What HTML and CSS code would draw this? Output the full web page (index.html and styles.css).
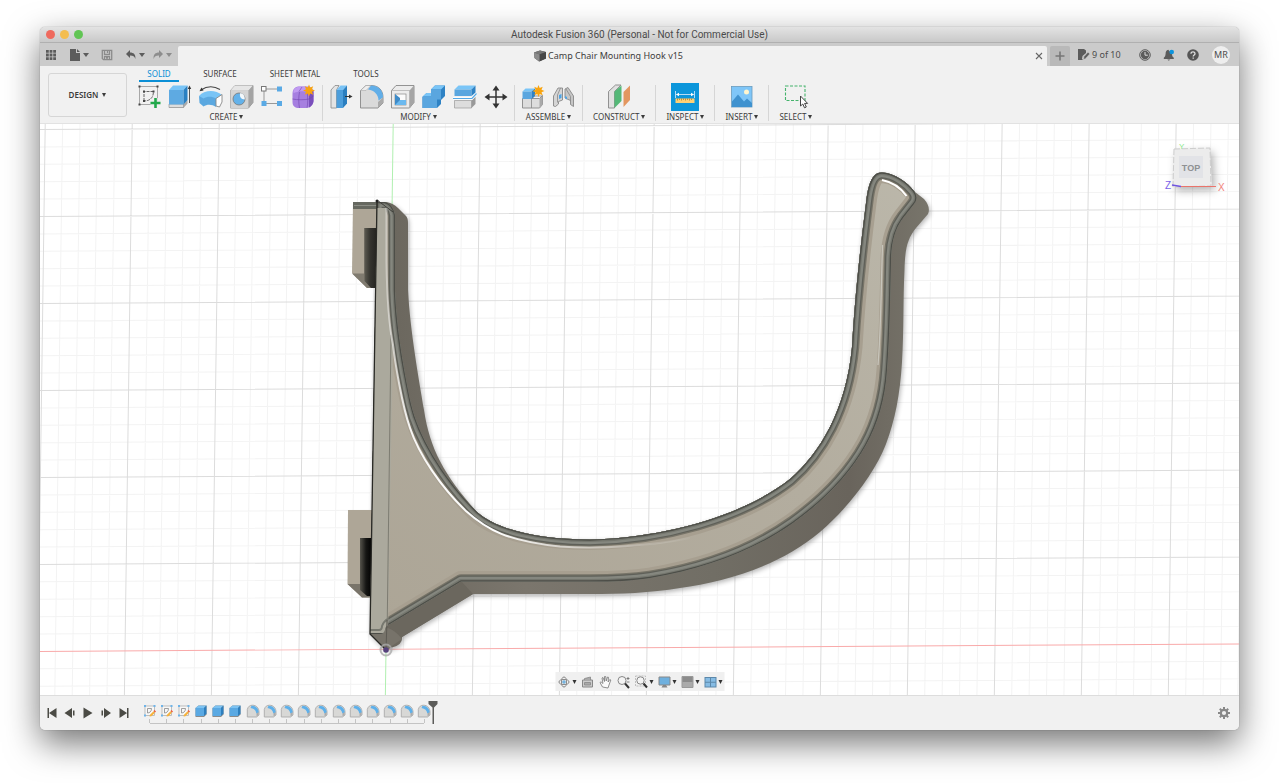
FILE: index.html
```html
<!DOCTYPE html>
<html lang="en">
<head>
<meta charset="utf-8">
<title>Autodesk Fusion 360</title>
<link rel="stylesheet" href="styles.css">
</head>
<body>
<svg class="defs" aria-hidden="true">
  <defs>
    <symbol id="t-sketch" viewBox="0 0 14 14">
      <rect x="2" y="2" width="9.500" height="9.500" fill="#f7f7f7" stroke="#a5a5a5" stroke-width=".7"/>
      <path d="M4.500 9V4.500h4c0 3-2 4.500-4 4.500z" fill="none" stroke="#888" stroke-width=".8"/>
      <path d="M1 1h2v2H1zM10.500 1h2v2h-2zM1 10.500h2v2H1z" fill="#6fb4e8"/>
      <path d="M6.500 12.500l.5-1.700 3.500-3.500 1.400 1.400-3.500 3.500z" fill="#f6b13a"/><path d="M10.500 7l1-1 1.500 1.500-1 1z" fill="#ee5a3a"/>
    </symbol>
    <symbol id="t-extrude" viewBox="0 0 14 14">
      <path d="M1.500 4l3-2.500h8v9L10 13H1.500z" fill="#8b8b8b"/>
      <path d="M1.500 4l3-2.500h8L10 4z" fill="#7cc3f3"/><path d="M1.500 4H10v8H1.500z" fill="#5aa9e3"/><path d="M10 4l2.500-2.500v8L10 12z" fill="#2d7fbe"/>
    </symbol>
    <symbol id="t-fillet" viewBox="0 0 14 14">
      <path d="M1.300 5.500C2 2.500 4 1.200 6.500 1.200c4 0 6.500 3 6.500 6.800v3L10.500 13H1.300z" fill="#d8d8d6" stroke="#aaa" stroke-width=".9"/>
      <path d="M5.500 1.700c4.500 0 7 2.800 7.300 6.800l-2.500 1C10 6.500 8 4.500 4.500 4z" fill="#5eb0ea"/>
      <path d="M10.500 9.500l2-1.500v3l-2 1.500z" fill="#ababab"/>
    </symbol>
  </defs>
</svg>

<div class="window">
  <header class="titlebar">
    <div class="lights"><i class="light red"></i><i class="light amber"></i><i class="light green"></i></div>
    <h1 class="title">Autodesk Fusion 360 (Personal - Not for Commercial Use)</h1>
  </header>

  <div class="tabbar">
    <div class="quick">
      <button class="qbtn" aria-label="Data panel"><svg width="12" height="12" viewBox="0 0 12 12" fill="#5c5c5c"><path d="M1 1h2.800v2.800H1zM4.600 1h2.800v2.800H4.600zM8.200 1H11v2.800H8.200zM1 4.600h2.800v2.800H1zM4.600 4.600h2.800v2.800H4.600zM8.200 4.600H11v2.800H8.200zM1 8.200h2.800V11H1zM4.600 8.200h2.800V11H4.600zM8.200 8.200H11V11H8.200z"/></svg></button>
      <button class="qbtn file" aria-label="File"><svg width="12" height="12" viewBox="0 0 12 12"><path d="M1 0h6v4h4v8H1z" fill="#5c5c5c"/><path d="M8 0l3 3H8z" fill="#5c5c5c"/></svg><i class="caret"></i></button>
      <button class="qbtn save" aria-label="Save"><svg width="12" height="12" viewBox="0 0 12 12" fill="none" stroke="#8b8b8b" stroke-width="1.300"><path d="M1.300 1.300h9.400v9.400H2.500L1.300 9.500z"/><path d="M3.500 1.500v3.800h5V1.500M3.500 10.500V7.500h5v3M6.500 2v2M5 9h2"/></svg></button>
      <button class="qbtn" aria-label="Undo"><svg width="12" height="12" viewBox="0 0 12 12"><path d="M5 1v2.600c3.500 0 6 2 5.300 6.400C9.500 7.500 8 6.500 5 6.600V9L1 5z" fill="#5c5c5c"/></svg><i class="caret"></i></button>
      <button class="qbtn dim" aria-label="Redo"><svg width="12" height="12" viewBox="0 0 12 12"><path d="M7 1v2.600C3.500 3.600 1 5.600 1.700 10 2.500 7.500 4 6.500 7 6.600V9l4-4z" fill="#8d8d8d"/></svg><i class="caret"></i></button>
    </div>
    <div class="doc">
      <svg width="12" height="12" viewBox="0 0 12 12"><path d="M0 2.500L6 .5 12 2v6.500L5 11.500.5 8z" fill="#555"/><path d="M0 2.500L6 .5 12 2 5.500 4.500z" fill="#777"/><path d="M5.500 4.500L12 2v6.500l-6.500 3z" fill="#484848"/><path d="M0 2.500l5.500 2v7L.5 8z" fill="#8c8c8c"/></svg>
      <span>Camp Chair Mounting Hook v15</span>
      <button class="close" aria-label="Close tab"><svg width="8" height="8" viewBox="0 0 8 8"><path d="M1 1l6 6M7 1L1 7" stroke="#666" stroke-width="1.100"/></svg></button>
    </div>
    <div class="status">
      <button class="plus" aria-label="New design"><svg width="10" height="10" viewBox="0 0 10 10"><path d="M5 .5v9M.5 5h9" stroke="#777" stroke-width="1.600"/></svg></button>
      <button class="count"><svg width="13" height="13" viewBox="0 0 13 13"><path d="M1 1h6l2 1.500V5L5.500 8 5 11l1 1H1z" fill="#5c5c5c"/><path d="M6.500 11.500l.5-3L11 4.200l1.700 1.700L8.800 10.200z" fill="#5c5c5c" stroke="#ccc" stroke-width=".5"/></svg><span>9 of 10</span></button>
      <button class="round" aria-label="Job status"><svg width="12" height="12" viewBox="0 0 12 12"><circle cx="6" cy="6" r="5.300" fill="none" stroke="#5c5c5c" stroke-width="1"/><circle cx="6" cy="6" r="4.200" fill="#5c5c5c"/><path d="M6 3v3.200h2.800" stroke="#ddd" fill="none"/></svg></button>
      <button class="round" aria-label="Notifications"><svg width="12" height="12" viewBox="0 0 12 12"><path d="M5.300.8c-2.200.5-2.600 2-2.700 4-.1 2-.7 3-1.800 4V10h10V8.800C9.500 8 9 6.500 9 5z" fill="#5c5c5c"/><path d="M4.300 10.500h3l-1.500 1.300z" fill="#5c5c5c"/><circle cx="8.700" cy="3" r="2.300" fill="#0d94dd"/></svg></button>
      <button class="round" aria-label="Help"><svg width="12" height="12" viewBox="0 0 12 12"><circle cx="6" cy="6" r="5.800" fill="#555"/><path d="M4 4.700c0-2.600 4-2.400 4 0C8 6 6.200 6 6.200 7.400M6.200 8.400v1.300" fill="none" stroke="#ddd" stroke-width="1.300"/></svg></button>
      <button class="avatar">MR</button>
    </div>
  </div>

  <div class="toolbar">
    <button class="workspace">DESIGN<i class="caret"></i></button>
    <div class="ribbon">
      <nav class="tabs">
        <a class="tab on" href="#solid">SOLID</a><a class="tab surface" href="#surface">SURFACE</a><a class="tab sheet" href="#sheet">SHEET METAL</a><a class="tab" href="#tools">TOOLS</a>
      </nav>
      <div class="groups">
        <section class="group">
          <div class="icons">
            <button class="tool" aria-label="Create sketch"><svg viewBox="0 0 26 26"><path d="M3.500 2.500h18v18h-18z" fill="none" stroke="#888" stroke-width=".7"/><path d="M2.500 1.500h2V3.500h-2zM20.500 1.500h2V3.500h-2zM2.500 19.500h2v2h-2z" fill="#444"/><path d="M8 17V7.500h9.500C17.500 14 13.500 17 8 17z" fill="none" stroke="#555" stroke-width=".9" stroke-dasharray="3 1"/><path d="M7 6.500h2v2H7zM16.500 6.500h2v2h-2zM7 16h2v2H7z" fill="#444"/><path d="M19.500 14v10M14.500 19h10" stroke="#f0f0f0" stroke-width="4.500"/><path d="M19.500 14v10M14.500 19h10" stroke="#22a84b" stroke-width="2.600"/></svg></button>
            <button class="tool" aria-label="Extrude"><svg viewBox="0 0 26 26"><path d="M2 20h14.500l4-4v3.500L16.500 24H2z" fill="#aaa"/><path d="M2 20h14.500v3.500H2z" fill="#ddd" stroke="#999" stroke-width=".7"/><path d="M2 6l4-4.500h14.500L16.500 6z" fill="#7ac5f7"/><path d="M2 6h14.500v14.500H2z" fill="#5eaae2"/><path d="M16.500 6l4-4.500V16l-4 4.500z" fill="#2a80c2"/><path d="M22.500 19V4" stroke="#444" stroke-width=".9"/><path d="M20.800 5l1.700-3.500L24.200 5z" fill="#333"/></svg></button>
            <button class="tool" aria-label="Revolve"><svg viewBox="0 0 26 26"><path d="M1 12C6 6 17 5 24 11l-5.500 5C15 13.500 9 14 5.500 17z" fill="#79c4f6"/><path d="M1 12l4.500 2.500C9 12 14 12 18 14.500V23c-4-3-9-3-12.500-.5L1.500 19z" fill="#5ba8e0"/><path d="M18 14.500l6-4v7.500l-2.500 5L18 22z" fill="#fff" stroke="#888" stroke-width=".9"/><path d="M3 6c6-4 13-4 19-.5" fill="none" stroke="#444" stroke-width="1.100"/><path d="M1.500 7.200L3.500 3.500 5.500 6.500z" fill="#333"/></svg></button>
            <button class="tool" aria-label="Hole"><svg viewBox="0 0 26 26"><path d="M1.500 6.500L6 1.500h18v17L19.500 24h-18z" fill="#bbb" stroke="#8a8a8a" stroke-width=".8"/><path d="M1.500 6.500L6 1.500h18l-4.500 5z" fill="#e6e6e6"/><path d="M1.500 6.500h18V24h-18z" fill="#d4d4d4"/><path d="M19.500 6.500l4.500-5v17L19.500 24z" fill="#a4a4a4"/><circle cx="10" cy="15" r="6" fill="#64b2ea" stroke="#777" stroke-width=".8"/><path d="M11 9.300c-.5 4 1 6 4.800 6.300C16 11 13.500 9.300 11 9.300z" fill="#f3f8fb"/></svg></button>
            <button class="tool" aria-label="Rectangular pattern"><svg viewBox="0 0 26 26"><path d="M4 5v14.500h15M4 5h15" fill="none" stroke="#999" stroke-width="1"/><rect x="1.500" y="2.500" width="4.500" height="4.500" fill="#fff" stroke="#777"/><path d="M17 2.500h5v5h-5zM1.500 17h5v5h-5zM17 17h5v5h-5z" fill="#5aaae5"/></svg></button>
            <button class="tool" aria-label="Create form"><svg viewBox="0 0 26 26"><path d="M1.500 10c0-5 2.500-7.500 7-7.500h8c4 0 6 3 6 7v7c0 4-3 7.500-8 7.500H8c-4 0-6.500-2-6.500-6z" fill="#a67fe0"/><path d="M18 9l4.500-3v11c0 3-3 6-4.500 6.500z" fill="#7a4fbb"/><path d="M2.500 6.500C5 2 8 2.500 15 2.500L18 8C13 7 8 7 2.500 9z" fill="#c09bf1"/><path d="M1.500 15c5 1 12 1 16.500 0l4.500-3M8.500 8c-1 5-1 11 0 16M16 8c1 5 1 11 0 16M8 7.500L11 3" fill="none" stroke="#7145ae" stroke-width=".6"/><path d="M18 .5l1.200 3 3-1.200-1.200 3L24 6.500l-3 1.200 1.200 3-3-1.200-1.200 3-1.200-3-3 1.200 1.200-3-3-1.200 3-1.200-1.200-3 3 1.200z" fill="#f8a40f"/></svg></button>
          </div>
          <button class="menu">CREATE<i class="caret"></i></button>
        </section>
        <section class="group">
          <div class="icons">
            <button class="tool" aria-label="Press pull"><svg viewBox="0 0 26 26"><path d="M3 6l4-4.500h4L8.500 6v18H3z" fill="#e4e4e4" stroke="#8a8a8a" stroke-width=".8"/><path d="M8.500 6l4-4.500h6.500l-4 4.500z" fill="#79c3f6"/><path d="M8.500 6H15v18H8.500z" fill="#4d9edb"/><path d="M15 6l4-4.500v18L15 24z" fill="#2b7fc0"/><path d="M17 12.500h5" stroke="#333"/><path d="M21 10.500l3.500 2-3.500 2z" fill="#333"/></svg></button>
            <button class="tool" aria-label="Fillet"><svg viewBox="0 0 26 26"><path d="M1.500 6.500L7 1.500h5c8 0 12 5 12 12V19l-5 5H1.500z" fill="#dadada" stroke="#888" stroke-width=".9"/><path d="M1.500 6.500L7 1.500h5l-5 5z" fill="#eee" stroke="#aaa" stroke-width=".6"/><path d="M9 5.500l3-4c8 0 12 5 12 12l-4.500 3c0-6-4-10-10.500-11z" fill="#61aee8"/><path d="M19 18l5-4.500V19l-5 5z" fill="#aaa"/></svg></button>
            <button class="tool" aria-label="Shell"><svg viewBox="0 0 26 26"><path d="M1.500 6.500L6 1.500h18v17L19.500 24h-18z" fill="#ececec" stroke="#888" stroke-width=".9"/><path d="M19.500 6.500l4.500-5v17L19.500 24z" fill="#a5a5a5"/><path d="M1.500 6.500h18V24" fill="none" stroke="#aaa" stroke-width=".7"/><rect x="5" y="10" width="11" height="11" fill="#fafafa" stroke="#888" stroke-width=".7"/><path d="M5 10l5 4v7H5z" fill="#3e8bc8"/><path d="M5 21l5-5h6v5z" fill="#6bb9ef"/></svg></button>
            <button class="tool" aria-label="Combine"><svg viewBox="0 0 26 26"><path d="M1.500 13l4-4H10V5.500l4-4h10V12l-4 4v4l-4 4H1.500z" fill="#2e82c4"/><path d="M1.500 12.500l4-3.500H10v3.500zM10 5.500l4-4h10l-4 4z" fill="#7ac5f7"/><path d="M1.500 12.500H10v-7h10v10h-4V24H1.500z" fill="#5aa6df"/></svg></button>
            <button class="tool" aria-label="Split body"><svg viewBox="0 0 26 26"><path d="M2.500 5.500l4-4h17l-4 4z" fill="#7ac5f7"/><path d="M2.500 5.500h17V12h-17z" fill="#5aa6df"/><path d="M19.500 5.500l4-4v7l-4 3.500z" fill="#2e82c4"/><path d="M2.500 16.500h17V24h-17z" fill="#ddd" stroke="#999" stroke-width=".7"/><path d="M19.500 16.500l4-4V20l-4 4z" fill="#999"/><path d="M1 14.500h19l4.500-5" fill="none" stroke="#fff" stroke-width="2.500"/><path d="M1 14.500h19l4.500-5" fill="none" stroke="#55a8e4" stroke-width="1.200"/></svg></button>
            <button class="tool" aria-label="Move"><svg viewBox="0 0 26 26"><path d="M13 4v18M4 13h18" stroke="#333" stroke-width="1.500"/><path d="M13 1.500l3.500 5h-7zM13 24.500l3.500-5h-7zM1.500 13l5-3.500v7zM24.500 13l-5-3.500v7z" fill="#333"/></svg></button>
          </div>
          <button class="menu">MODIFY<i class="caret"></i></button>
        </section>
        <section class="group">
          <div class="icons">
            <button class="tool" aria-label="New component"><svg viewBox="0 0 26 26"><path d="M2.500 14.500h17l3-3v9L19.500 24h-17z" fill="#ddd" stroke="#888" stroke-width=".9"/><path d="M11.500 15v9M11.500 15l3-3h8" stroke="#888" fill="none" stroke-width=".8"/><path d="M19.500 15l3-3v8.500l-3 3.500z" fill="#aaa"/><path d="M2.500 7.500l3-3H15l-3.500 3z" fill="#7ac5f7"/><path d="M2.500 7.500h9V15h-9z" fill="#5aa6df"/><path d="M11.500 7.500l3.500-3V12l-3.500 3z" fill="#2e82c4"/><path d="M18.500 1l1.200 3 3-1.200-1.200 3 3 1.200-3 1.200 1.200 3-3-1.200-1.200 3-1.200-3-3 1.200 1.200-3-3-1.200 3-1.200-1.200-3 3 1.200z" fill="#f8a40f"/></svg></button>
            <button class="tool" aria-label="Joint"><svg viewBox="0 0 26 26"><path d="M2.500 22V12L7 4h4.500v12l-4 1.500V20L4.500 22.500z" fill="#d5d5d5" stroke="#888" stroke-width=".9"/><path d="M6.500 18.500V11L9.500 4" fill="none" stroke="#888" stroke-width=".8"/><path d="M14 12V5l3-1.500L22.500 12v10.500l-3-2v-4L14 14z" fill="#c6c6c6" stroke="#888" stroke-width=".9"/><path d="M19.500 17v-4.500L15 5" fill="none" stroke="#888" stroke-width=".8"/><path d="M8 11l2.500-1v4L8 15zM14 12l2 1v2.500L14 14z" fill="#4da4e6"/></svg></button>
          </div>
          <button class="menu">ASSEMBLE<i class="caret"></i></button>
        </section>
        <section class="group wide">
          <div class="icons"><button class="tool" aria-label="Offset plane"><svg viewBox="0 0 26 26"><path d="M2.500 7.500l7-6.500H15L8.500 7.500V24h-6z" fill="#e0e0e0" stroke="#888" stroke-width=".9"/><path d="M8.500 7.500L15.500 1.500V17l-7 7z" fill="#54b877"/><path d="M17.500 8l6.500-6.500V16l-6.500 7z" fill="#e39760"/></svg></button></div>
          <button class="menu">CONSTRUCT<i class="caret"></i></button>
        </section>
        <section class="group wide">
          <div class="icons"><button class="tool active" aria-label="Measure"><svg viewBox="0 0 26 26"><path d="M3.500 7v7M22.500 7v7M4.500 10.500h17" stroke="#b4dcf6" stroke-width="1"/><path d="M4 10.500l3-1.700v3.400zM22 10.500l-3-1.700v3.400z" fill="#fff"/><path d="M3.500 14.500h19V19h-19z" fill="#ffd176"/><path d="M5.500 14.500v2M7.500 14.500v1.500M9.500 14.500v2M11.500 14.500v1.500M13.500 14.500v2M15.500 14.500v1.500M17.500 14.500v2M19.500 14.500v1.500" stroke="#a37528" stroke-width=".7"/></svg></button></div>
          <button class="menu">INSPECT<i class="caret"></i></button>
        </section>
        <section class="group wide">
          <div class="icons"><button class="tool" aria-label="Insert image"><svg viewBox="0 0 26 26"><rect x="2.500" y="2.500" width="20.500" height="20.500" fill="#7fc6f8" stroke="#6a9cbe" stroke-width=".8"/><circle cx="17.500" cy="8" r="2.500" fill="#fff5ce"/><path d="M3 17.500l6-7 6 7 3-3 5 4.500v4H3z" fill="#3f92cf"/></svg></button></div>
          <button class="menu">INSERT<i class="caret"></i></button>
        </section>
        <section class="group wide">
          <div class="icons"><button class="tool" aria-label="Select"><svg viewBox="0 0 26 26"><rect x="2.500" y="2" width="19.500" height="14.500" fill="none" stroke="#45b36c" stroke-width="1.100" stroke-dasharray="3 1.500"/><path d="M17.500 12v10l2.300-2 1.700 3.800 1.800-.8-1.700-3.600h3z" fill="#fff" stroke="#444" stroke-width="1"/></svg></button></div>
          <button class="menu">SELECT<i class="caret"></i></button>
        </section>
      </div>
    </div>
  </div>

  <main class="viewport">
    <svg class="scene" viewBox="40 124 1199 571" preserveAspectRatio="xMidYMid slice" role="img" aria-label="Hook model">
      <defs>
        <linearGradient id="face" x1="0" y1="1" x2="1" y2="0"><stop offset="0" stop-color="#aca596"/><stop offset=".55" stop-color="#b3ad9f"/><stop offset="1" stop-color="#bbb7aa"/></linearGradient>
        <linearGradient id="side" gradientUnits="userSpaceOnUse" x1="390" y1="0" x2="930" y2="0"><stop offset="0" stop-color="#6b675e"/><stop offset=".25" stop-color="#7b766d"/><stop offset=".6" stop-color="#716e65"/><stop offset=".85" stop-color="#69645c"/><stop offset="1" stop-color="#78756b"/></linearGradient>
        <linearGradient id="recess"><stop offset="0" stop-color="#5c5a51"/><stop offset=".45" stop-color="#35342f"/><stop offset="1" stop-color="#23221f"/></linearGradient>
        <linearGradient id="recess2"><stop offset="0" stop-color="#56544c"/><stop offset=".5" stop-color="#161614"/><stop offset="1" stop-color="#000"/></linearGradient>
        <linearGradient id="shine" gradientUnits="userSpaceOnUse" x1="385" y1="0" x2="700" y2="0"><stop offset="0" stop-color="#fff" stop-opacity=".4"/><stop offset=".08" stop-color="#fff" stop-opacity=".9"/><stop offset=".35" stop-color="#fff"/><stop offset=".55" stop-color="#fff" stop-opacity=".55"/><stop offset="1" stop-color="#fff" stop-opacity="0"/></linearGradient>
        <filter id="soft" x="-10%" y="-10%" width="120%" height="120%"><feGaussianBlur stdDeviation="2.500"/></filter>
        <path id="body" d="M377 202 H386 Q393 203 398 208 L406 216 Q408 218 408 223 L408 290 C410 330 419 380 424 410 C430 450 445 476 477 512 C497 530 540 539.500 590 539.500 C660 538 740 518 790 479 C820 453 846 410 852 347 C855 295 860 250 866 203 C868 185 872 172 882 172.500 C895 173 908 185 915 192 L924 199 Q931 207 928 214 L916 228 C907 239 905 250 904.500 270 C903 300 904 330 902 362 C900 395 895 420 886 444 C875 473 848 508 820 532 C780 566 725 582 680 588 C650 593 620 594 590 594 H473 L402 637 Q403 645 392 647.500 L386 650 L370 634 Z"/>
        <path id="top" d="M377 202 H385 Q393 204 395 215 L395 290 C396 325 404 372 411 404 C418 435 442 477 477 512 C497 530 540 539.500 590 539.500 C660 538 740 518 790 479 C820 453 846 410 852 347 C855 295 860 250 866 203 C868 185 872 172 882 172.500 C895 173 908 183 914 191 Q919 198 914 204 L903 218 C894 230 891 245 891 262 C890 300 890 330 887 370 C885 400 878 423 866 445 C850 474 825 500 793 523 C755 550 705 569 650 578 C630 581 615 581.500 590 581.500 H461 L390 624 Q385 626 385 630 Q384 634 380 634 H370 Z"/>
        <clipPath id="topclip"><use href="#top"/></clipPath>
      </defs>
      <rect x="-600" y="-600" width="2500" height="2000" fill="#fff"/>
      <g id="grid" transform="matrix(1 -.00625 -.0137 1 386 649.300)"></g>
      <g filter="url(#soft)" opacity=".3"><use href="#body" x="1" y="2"/></g>
      <path d="M353 202H377V288H367L352 273z" fill="#aea697"/>
      <path d="M353 202H378V209H353z" fill="#666860"/><path d="M354 205.500H377" stroke="#8b8d85"/>
      <path d="M352 273.500H364V228H377V288H367z" fill="#807b70"/>
      <path d="M364.500 228H377V288H371L364.500 281z" fill="url(#recess)"/>
      <path d="M348 510H373V597.500H362L347.500 584z" fill="#aea697"/>
      <path d="M347.500 584H360V538H372V597.500H362z" fill="#79746a"/>
      <path d="M360 538H372V596H367L360 590z" fill="url(#recess2)"/>
      <use href="#body" fill="url(#side)"/>
      <path d="M461 581L473 594 402 637 388 626z" fill="#6b675e"/>
      <path d="M370 634L386 650 402 639Q396 631 388 628z" fill="#77736a"/>
      <g clip-path="url(#topclip)" fill="none" stroke-linejoin="round">
        <use href="#top" fill="url(#face)"/>
        <use href="#top" stroke="#a79f90" stroke-width="21"/>
        <use href="#top" stroke="#777468" stroke-width="14.500"/>
        <use href="#top" stroke="#5f6059" stroke-width="12"/>
        <use href="#top" stroke="#85877f" stroke-width="9.500"/>
        <use href="#top" stroke="#74766e" stroke-width="5"/>
        <use href="#top" stroke="#4d4e48" stroke-width="2.500"/>
        <path d="M377 208H386V262C386 300 391 335 393 346L388 633H370z" fill="#aba99d"/>
        <path d="M391 335L387 640" stroke="#77766c" stroke-width=".9"/>
        <path d="M386.500 208V262C387 300 389 325 393 345C395 362 402 405 410 428C419 455 441 487 466 511C487 530 508 541 560 546.500C600 549 650 546 690 538" stroke="url(#shine)" stroke-width="2"/>
        <path d="M882 180C892 182 901 188 906.500 196" stroke="#fff" stroke-width="2"/>
        <path d="M882.500 245C881 290 881 330 878 365" stroke="#d0cec5" stroke-width="1.300" opacity=".8"/>
        <path d="M370 630H379Q382 630 382 626 384 621 388 619" stroke="#77786f" stroke-width="2"/>
      </g>
      <path d="M377 200L370 634 386 650" fill="none" stroke="#292925" stroke-width="1.300"/>
      <path d="M377 200L393 212" stroke="#3d3d39" stroke-width="1"/>
      <path d="M387 620L386 650" stroke="#55534c" stroke-width=".8"/>
      <circle cx="377" cy="201" r="1.500" fill="#222"/>
      <circle cx="386" cy="650" r="5.500" fill="none" stroke="#aaa" stroke-width="2" opacity=".8"/>
      <circle cx="386" cy="650" r="2.800" fill="#55427c"/>
    </svg>

    <svg class="viewcube" width="66" height="56" viewBox="0 0 66 56" role="img" aria-label="View cube">
      <g class="cube"><path d="M11 9L47 8 49 46 10 47z" fill="#ececec"/></g>
      <path d="M11 9L47 8 48 46 10 47z" fill="none" stroke="#cdcdcd" stroke-dasharray="6 2"/>
      <rect x="16" y="16" width="24" height="22" fill="#e2e3e7"/>
      <path d="M9 45l9 1.500" stroke="#6f55e0" stroke-width="1.500"/><path d="M18 46.500h35" stroke="#ed6a60" stroke-width=".9"/>
      <text class="cube-face" x="28" y="31" text-anchor="middle">TOP</text>
      <text class="axis" x="2" y="49" fill="#7a62e8">Z</text><text class="axis" x="55" y="51" fill="#f2837c">X</text><text class="axis small" x="16" y="9" fill="#8ae88a">Y</text>
    </svg>

    <div class="navbar">
      <button aria-label="Orbit"><svg width="14" height="14" viewBox="0 0 14 14" fill="none" stroke="#888"><ellipse cx="6.500" cy="7" rx="5" ry="2.500"/><ellipse cx="6.500" cy="7" rx="2.500" ry="5"/><path d="M6.500 5v4M4.500 7h4" stroke="#4e9fd8"/></svg><i class="caret"></i></button>
      <button aria-label="Look at"><svg width="14" height="14" viewBox="0 0 14 14"><path d="M2 5h10v7H2z" fill="#ccc" stroke="#888"/><path d="M4 5V3.500l6-1.500v3M4 7.500h6v2.500H4z" fill="#aaa" stroke="#888" stroke-width=".8"/></svg></button>
      <button aria-label="Pan"><svg width="14" height="14" viewBox="0 0 14 14"><path d="M4 12L1.500 7.500l1-.7L4.500 8.500 3.500 3l1-.5L6 6.500 6 1.500h1.200L7.700 6 9 2l1 .3L9.600 7l1.700-2.500 1 .5-1.800 5-1 3z" fill="#fafafa" stroke="#777" stroke-width=".8"/></svg></button>
      <button aria-label="Zoom"><svg width="14" height="14" viewBox="0 0 14 14"><circle cx="5.500" cy="5.500" r="4" fill="#f4f4f4" stroke="#888"/><path d="M8.500 8.500L12.500 13" stroke="#333" stroke-width="2"/><path d="M11.500 2v3M10 3.500h3M10 7h3" stroke="#666" stroke-width=".8"/></svg></button>
      <button aria-label="Fit"><svg width="14" height="14" viewBox="0 0 14 14"><path d="M1 1h10v10H1z" fill="none" stroke="#aaa" stroke-width=".7" stroke-dasharray="2 1"/><circle cx="6" cy="5.500" r="3.700" fill="#f4f4f4" stroke="#888"/><path d="M9 8.500l3.500 4" stroke="#333" stroke-width="2"/></svg><i class="caret"></i></button>
      <button aria-label="Display settings"><svg width="14" height="14" viewBox="0 0 14 14"><path d="M1.500 2h11v8h-11z" fill="#6fb0de" stroke="#888"/><path d="M4 12.500h6L8.500 10h-3z" fill="#888"/></svg><i class="caret"></i></button>
      <button aria-label="Grid and snaps"><svg width="14" height="14" viewBox="0 0 14 14"><path d="M1.500 1.500h11v11h-11z" fill="#aaa" stroke="#999"/><path d="M2 2h10v5H2z" fill="#8b8b8b"/></svg><i class="caret"></i></button>
      <button aria-label="Viewports"><svg width="14" height="14" viewBox="0 0 14 14"><path d="M1 2h12v10.500H1z" fill="#5c88aa"/><path d="M2 3h4.500v3.700H2zM7.500 3H12v3.700H7.500zM2 7.700h4.500v3.800H2zM7.500 7.700H12v3.800H7.500z" fill="#86bce4"/></svg><i class="caret"></i></button>
    </div>
  </main>

  <footer class="timeline">
    <div class="playback">
      <button aria-label="Go to start"><svg width="12" height="12" viewBox="0 0 12 12" fill="#4b4b45"><path d="M1.500 1H3v10H1.500zM10.500 1v10L3 6z"/></svg></button>
      <button aria-label="Step back"><svg width="12" height="12" viewBox="0 0 12 12" fill="#4b4b45"><path d="M8 1v10L.5 6zM9 3.500h1.500v5H9z"/></svg></button>
      <button aria-label="Play"><svg width="12" height="12" viewBox="0 0 12 12" fill="#4b4b45"><path d="M1.500 .5v11L10.500 6z"/></svg></button>
      <button aria-label="Step forward"><svg width="12" height="12" viewBox="0 0 12 12" fill="#4b4b45"><path d="M4 1v10l7-5zM1.500 3.500H3v5H1.500z"/></svg></button>
      <button aria-label="Go to end"><svg width="12" height="12" viewBox="0 0 12 12" fill="#4b4b45"><path d="M9 1h1.500v10H9zM1.500 1v10L9 6z"/></svg></button>
    </div>
    <div class="history">
      <ol class="steps">
        <li><svg><use href="#t-sketch"/></svg></li><li><svg><use href="#t-sketch"/></svg></li><li><svg><use href="#t-sketch"/></svg></li>
        <li><svg><use href="#t-extrude"/></svg></li><li><svg><use href="#t-extrude"/></svg></li><li><svg><use href="#t-extrude"/></svg></li>
        <li><svg><use href="#t-fillet"/></svg></li><li><svg><use href="#t-fillet"/></svg></li><li><svg><use href="#t-fillet"/></svg></li><li><svg><use href="#t-fillet"/></svg></li><li><svg><use href="#t-fillet"/></svg></li><li><svg><use href="#t-fillet"/></svg></li><li><svg><use href="#t-fillet"/></svg></li><li><svg><use href="#t-fillet"/></svg></li><li><svg><use href="#t-fillet"/></svg></li><li><svg><use href="#t-fillet"/></svg></li><li><svg><use href="#t-fillet"/></svg></li>
      </ol>
      <svg class="marker" width="10" height="24" viewBox="0 0 10 24"><path d="M.5 1h9v3L6 7.500V24H4.500V7.500L.5 4z" fill="#5c5c5a"/></svg>
    </div>
    <button class="gear" aria-label="Settings"><svg width="12" height="12" viewBox="0 0 12 12"><circle cx="6" cy="6" r="3.200" fill="none" stroke="#888" stroke-width="2.200"/><path d="M6 0v2.500M6 9.500V12M0 6h2.500M9.500 6H12M1.800 1.800l1.700 1.700M8.500 8.500l1.700 1.700M10.200 1.800L8.500 3.500M3.500 8.500l-1.700 1.700" stroke="#888" stroke-width="2"/></svg></button>
  </footer>
</div>
<script src="grid.js"></script>
</body>
</html>
```

FILE: styles.css
```css
* { box-sizing: border-box; }
body {
  margin: 0;
  height: 100vh;
  min-height: 500px;
  padding: 27px 40px 53px;
  background: #fff;
  color: #3c3c3c;
  font: 9px/12px "Noto Sans", "Open Sans", sans-serif;
  overflow: hidden;
}
button { border: 0; padding: 0; margin: 0; background: none; color: inherit; font: inherit; display: flex; align-items: center; justify-content: center; }
svg { display: block; flex: none; }
.defs { position: absolute; width: 0; height: 0; }
.caret { display: block; border: 3px solid transparent; border-top: 4px solid currentColor; border-bottom: 0; width: 0; flex: none; }

.window {
  height: 100%;
  display: flex;
  flex-direction: column;
  border-radius: 5px;
  box-shadow: 0 0 1px rgba(0, 0, 0, .5), 0 13px 34px rgba(0, 0, 0, .55);
  background: #f1f1f1;
}
.titlebar {
  height: 16px;
  display: grid;
  grid-template-columns: 60px 1fr 60px;
  align-items: center;
  border-radius: 5px 5px 0 0;
  border-bottom: 1px solid #b0b0b0;
  background: linear-gradient(#e3e3e3, #c9c9c9);
}
.lights { display: flex; gap: 5px; padding-left: 6px; }
.light { width: 9px; height: 9px; border-radius: 50%; }
.red { background: #ef6a5e; }
.amber { background: #f4bd4f; }
.green { background: #61c554; }
.title { margin: 0; text-align: center; font: 10px/15px Roboto, sans-serif; color: #4a4a4a; }

.tabbar { display: flex; height: 23px; background: #cbcbcb; color: #4c4c4c; }
.quick { width: 138px; display: flex; align-items: center; padding-left: 5px; gap: 5px; color: #5c5c5c; }
.qbtn { gap: 2px; }
.file { margin-left: 7px; }
.save { margin: 0 7px; }
.dim { color: #8d8d8d; margin-left: 2px; }
.doc { flex: 1; margin-top: 3px; border-radius: 2px 2px 0 0; background: #f1f1f1; display: flex; align-items: center; justify-content: center; gap: 2px; padding-right: 8px; position: relative; color: #3c3c3c; }
.close { position: absolute; right: 4px; top: 6px; }
.status { width: 192px; display: flex; align-items: center; padding: 0 9px 0 3px; }
.plus { width: 20px; height: 20px; margin-top: 3px; background: #b9b9b9; border-radius: 2px 2px 0 0; }
.count { gap: 2px; margin: 0 12px 0 7px; white-space: nowrap; }
.round { width: 24px; }
.avatar { width: 18px; height: 18px; margin-left: auto; border-radius: 50%; background: #eee; }

.toolbar { height: 58px; display: flex; background: #f1f1f1; border-bottom: 1px solid #e2e2e2; }
.workspace { width: 79px; height: 44px; margin: 7px 0 0 8px; border: 1px solid #d6d6d6; border-radius: 3px; gap: 4px; font-size: 8px; font-weight: 600; }
.workspace .caret, .menu .caret { border-width: 4px 2px 0; }
.ribbon { flex: 1; padding-left: 4px; }
.tabs { display: flex; height: 17px; padding-left: 8px; font-size: 8px; }
.tab { width: 40px; height: 16px; line-height: 15px; text-align: center; color: inherit; text-decoration: none; white-space: nowrap; }
.tab.on { color: #0b8fd6; border-bottom: 2px solid #0b8fd6; }
.surface { width: 82px; }
.sheet { width: 68px; }
.sheet + .tab { width: 74px; }
.groups { display: flex; }
.group { padding: 0 5px; height: 38px; margin-right: 1px; position: relative; display: flex; flex-direction: column; align-items: center; }
.group:not(:last-child)::after { content: ""; position: absolute; right: -1px; top: 2px; height: 36px; border-right: 1px solid #d6d6d6; }
.group.wide { padding: 0 10px; }
.icons { display: flex; gap: 5px; }
.tool { width: 26px; height: 28px; }
.tool svg { width: 26px; height: 26px; }
.tool.active { width: 28px; background: #0c96db; }
.menu { gap: 2px; font-size: 8px; line-height: 12px; }

.viewport { flex: 1; min-height: 0; position: relative; overflow: hidden; }
.scene { width: 100%; height: 100%; }
.viewcube { position: absolute; right: 10px; top: 16px; overflow: visible; font-family: "Liberation Sans", sans-serif; }
.cube { filter: drop-shadow(3px 4px 4px rgba(0, 0, 0, .3)); }
.cube-face { font-size: 9px; font-weight: bold; fill: #8f9194; }
.axis { font-size: 10px; }
.axis.small { font-size: 8px; }
.navbar { position: absolute; left: 50%; bottom: 4px; transform: translateX(-50%); height: 19px; padding: 0 2px; display: flex; align-items: center; gap: 4px; background: #f0f0f0; }
.navbar button { gap: 1px; }
.navbar .caret { border-width: 4px 2px 0; color: #333; }

.timeline { height: 35px; display: flex; align-items: center; border-top: 1px solid #ddd; border-radius: 0 0 5px 5px; background: #f1f1f1; padding: 0 9px 0 6px; }
.playback { display: flex; gap: 6px; }
.history { position: relative; margin-left: 11px; }
.steps { list-style: none; margin: 0; padding: 0 0 3px; width: 292px; height: 24px; display: grid; grid-template-columns: repeat(17, 1fr); justify-items: center; position: relative; margin-top: 6px; }
.steps li { width: 14px; }
.steps li svg { width: 14px; height: 14px; }
.steps li::after { content: ""; display: block; width: 1px; height: 4px; margin: 1px auto 0; background: #c4c4c4; }
.steps::after { content: ""; position: absolute; left: 9px; right: 9px; top: 19px; border-top: 1px solid #c4c4c4; }
.marker { position: absolute; right: -5px; top: 2px; }
.gear { margin-left: auto; }
```

FILE: grid.js
```js
// Draws the ground grid: a minor line every fifth of a major cell, plus the two axes.
(function () {
  var major = 87, minor = major / 5, fine = "", bold = "";
  for (var i = -60; i <= 90; i++) {
    var x = i * minor;
    var v = "M" + x + " -900V400", h = "M-900 " + (-x) + "H1600";
    if (i === 0) continue;
    if (i % 5 === 0) bold += v + h; else fine += v + h;
  }
  document.getElementById("grid").innerHTML =
    '<path d="' + fine + '" stroke="#f3f3f3" stroke-width="1"/>' +
    '<path d="' + bold + '" stroke="#dcdcdc" stroke-width="1"/>' +
    '<path d="M-900 0H1600" stroke="#f9aaaa" stroke-width="1"/>' +
    '<path d="M0 -900V400" stroke="#b0f0b0" stroke-width="1"/>';
})();
```
